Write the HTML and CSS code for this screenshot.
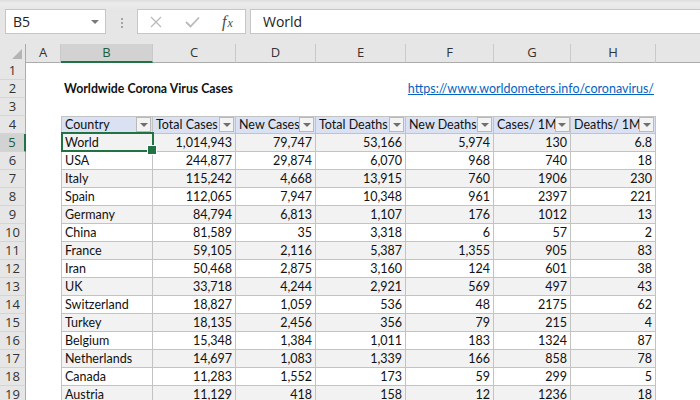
FILE: index.html
```html
<!DOCTYPE html>
<html lang="en">
<head>
<meta charset="utf-8">
<title>Worldwide Corona Virus Cases</title>
<link rel="stylesheet" href="styles.css">
</head>
<body>
<div class="app">
  <div class="fbar">
    <div class="namebox"><span>B5</span><span class="caret"></span></div>
    <div class="grip"><span></span><span></span><span></span></div>
    <div class="btns">
      <svg class="ico-x" width="12" height="12" viewBox="0 0 12 12"><path d="M1 1 L11 11 M11 1 L1 11" stroke="#b9b9b9" stroke-width="1.3" fill="none"/></svg>
      <svg class="ico-ok" width="15" height="12" viewBox="0 0 15 12"><path d="M1 6 L5.5 10.5 L14 1.5" stroke="#b9b9b9" stroke-width="1.8" fill="none"/></svg>
      <span class="fx"><i>f</i><i class="fx-x">x</i></span>
    </div>
    <div class="finput">World</div>
  </div>

  <div class="sheet">
    <div class="row colhead">
      <div class="corner"><svg width="10" height="10" viewBox="0 0 10 10"><path d="M10 0 L10 10 L0 10 Z" fill="#b4b4b4"/></svg></div>
      <div class="ch">A</div><div class="ch sel">B</div><div class="ch">C</div><div class="ch">D</div><div class="ch">E</div><div class="ch">F</div><div class="ch">G</div><div class="ch">H</div><div class="ch last"></div>
    </div>

    <div class="row"><div class="rh">1</div></div>
    <div class="row"><div class="rh">2</div><div></div><div class="title">Worldwide Corona Virus Cases</div><div class="link">https://www.worldometers.info/coronavirus/</div></div>
    <div class="row"><div class="rh">3</div></div>

    <div class="row hdr"><div class="rh">4</div><div></div>
      <div class="t first"><span>Country</span><span class="dd"></span></div>
      <div class="t"><span>Total Cases</span><span class="dd"></span></div>
      <div class="t"><span>New Cases</span><span class="dd"></span></div>
      <div class="t"><span>Total Deaths</span><span class="dd"></span></div>
      <div class="t"><span>New Deaths</span><span class="dd"></span></div>
      <div class="t"><span>Cases/ 1M</span><span class="dd"></span></div>
      <div class="t"><span>Deaths/ 1M</span><span class="dd"></span></div>
    </div>

    <div class="row band"><div class="rh sel">5</div><div></div><div class="t first active">World</div><div class="t n">1,014,943</div><div class="t n">79,747</div><div class="t n">53,166</div><div class="t n">5,974</div><div class="t n">130</div><div class="t n">6.8</div></div>
    <div class="row"><div class="rh">6</div><div></div><div class="t first">USA</div><div class="t n">244,877</div><div class="t n">29,874</div><div class="t n">6,070</div><div class="t n">968</div><div class="t n">740</div><div class="t n">18</div></div>
    <div class="row band"><div class="rh">7</div><div></div><div class="t first">Italy</div><div class="t n">115,242</div><div class="t n">4,668</div><div class="t n">13,915</div><div class="t n">760</div><div class="t n">1906</div><div class="t n">230</div></div>
    <div class="row"><div class="rh">8</div><div></div><div class="t first">Spain</div><div class="t n">112,065</div><div class="t n">7,947</div><div class="t n">10,348</div><div class="t n">961</div><div class="t n">2397</div><div class="t n">221</div></div>
    <div class="row band"><div class="rh">9</div><div></div><div class="t first">Germany</div><div class="t n">84,794</div><div class="t n">6,813</div><div class="t n">1,107</div><div class="t n">176</div><div class="t n">1012</div><div class="t n">13</div></div>
    <div class="row"><div class="rh">10</div><div></div><div class="t first">China</div><div class="t n">81,589</div><div class="t n">35</div><div class="t n">3,318</div><div class="t n">6</div><div class="t n">57</div><div class="t n">2</div></div>
    <div class="row band"><div class="rh">11</div><div></div><div class="t first">France</div><div class="t n">59,105</div><div class="t n">2,116</div><div class="t n">5,387</div><div class="t n">1,355</div><div class="t n">905</div><div class="t n">83</div></div>
    <div class="row"><div class="rh">12</div><div></div><div class="t first">Iran</div><div class="t n">50,468</div><div class="t n">2,875</div><div class="t n">3,160</div><div class="t n">124</div><div class="t n">601</div><div class="t n">38</div></div>
    <div class="row band"><div class="rh">13</div><div></div><div class="t first">UK</div><div class="t n">33,718</div><div class="t n">4,244</div><div class="t n">2,921</div><div class="t n">569</div><div class="t n">497</div><div class="t n">43</div></div>
    <div class="row"><div class="rh">14</div><div></div><div class="t first">Switzerland</div><div class="t n">18,827</div><div class="t n">1,059</div><div class="t n">536</div><div class="t n">48</div><div class="t n">2175</div><div class="t n">62</div></div>
    <div class="row band"><div class="rh">15</div><div></div><div class="t first">Turkey</div><div class="t n">18,135</div><div class="t n">2,456</div><div class="t n">356</div><div class="t n">79</div><div class="t n">215</div><div class="t n">4</div></div>
    <div class="row"><div class="rh">16</div><div></div><div class="t first">Belgium</div><div class="t n">15,348</div><div class="t n">1,384</div><div class="t n">1,011</div><div class="t n">183</div><div class="t n">1324</div><div class="t n">87</div></div>
    <div class="row band"><div class="rh">17</div><div></div><div class="t first">Netherlands</div><div class="t n">14,697</div><div class="t n">1,083</div><div class="t n">1,339</div><div class="t n">166</div><div class="t n">858</div><div class="t n">78</div></div>
    <div class="row"><div class="rh">18</div><div></div><div class="t first">Canada</div><div class="t n">11,283</div><div class="t n">1,552</div><div class="t n">173</div><div class="t n">59</div><div class="t n">299</div><div class="t n">5</div></div>
    <div class="row band"><div class="rh">19</div><div></div><div class="t first">Austria</div><div class="t n">11,129</div><div class="t n">418</div><div class="t n">158</div><div class="t n">12</div><div class="t n">1236</div><div class="t n">18</div></div>
  </div>
</div>
</body>
</html>
```

FILE: styles.css
```css
* { box-sizing: border-box; margin: 0; padding: 0; }

html, body { width: 700px; height: 400px; overflow: hidden; background: #fff; }
body { font-family: Lato, "Liberation Sans", sans-serif; color: #111; }

.app { width: 700px; height: 400px; overflow: hidden; }

/* formula bar */
.fbar {
  height: 44px;
  display: flex;
  align-items: flex-start;
  padding-top: 9px;
  background: linear-gradient(#dcdcdc 0, #ececec 3px, #e6e6e6 10px);
  font-family: "Open Sans", "Liberation Sans", sans-serif;
}
.namebox {
  margin-left: 5px;
  width: 101px;
  height: 25px;
  background: #fff;
  border: 1px solid #c6c6c6;
  display: flex;
  align-items: center;
  justify-content: space-between;
  padding: 0 6px 0 7px;
  font-size: 14px;
  color: #222;
}
.caret {
  width: 0; height: 0;
  border-left: 4px solid transparent;
  border-right: 4px solid transparent;
  border-top: 4px solid #7a7a7a;
}
.grip {
  margin-left: 15px;
  margin-top: 9px;
  display: flex;
  flex-direction: column;
  gap: 2px;
}
.grip span { width: 2px; height: 2px; background: #a5a5a5; }
.btns {
  margin-left: 14px;
  width: 109px;
  height: 25px;
  background: #fff;
  border: 1px solid #c6c6c6;
  display: flex;
  align-items: center;
  padding-left: 12px;
}
.ico-ok { margin-left: 23px; }
.fx {
  margin-left: 22px;
  font-family: "Liberation Serif", serif;
  font-size: 16px;
  color: #4a4a4a;
  line-height: 1;
}
.fx i { font-style: italic; }
.fx-x { font-size: 12px; margin-left: 1px; }
.finput {
  margin-left: 4px;
  flex: 1;
  height: 25px;
  background: #fff;
  border: 1px solid #c6c6c6;
  border-right: none;
  padding-left: 12px;
  font-size: 14px;
  line-height: 23px;
  color: #222;
}

/* sheet */
.row {
  display: grid;
  grid-template-columns: 26px 35px 92px 83px 80px 90px 88px 77px 85px 1fr;
  height: 18px;
}

.corner {
  background: #e6e6e6;
  border-right: 1px solid #ababab;
  border-bottom: 1px solid #ababab;
  display: flex;
  align-items: flex-end;
  justify-content: flex-end;
  padding: 0 3px 3px 0;
}
.ch {
  background: #e6e6e6;
  border-right: 1px solid #c9c9c9;
  border-bottom: 1px solid #ababab;
  font-family: "Open Sans", "Liberation Sans", sans-serif;
  font-size: 13px;
  line-height: 17px;
  text-align: center;
  color: #333;
}
.ch.sel {
  background: #d2d2d2;
  border-bottom: 2px solid #217346;
  color: #1d5e3a;
}
.ch.last { border-right: none; }

.rh {
  background: #e6e6e6;
  border-right: 1px solid #ababab;
  border-bottom: 1px solid #d5d5d5;
  font-family: "Open Sans", "Liberation Sans", sans-serif;
  font-size: 13px;
  line-height: 17px;
  text-align: center;
  color: #333;
}
.rh.sel {
  background: #d2d2d2;
  border-right: 2px solid #217346;
  color: #1d5e3a;
}

.title {
  grid-column: 3 / 6;
  padding-left: 3px;
  font-weight: bold;
  font-size: 12.3px;
  line-height: 18px;
  white-space: nowrap;
}
.link {
  grid-column: 6 / 10;
  padding-right: 2px;
  text-align: right;
  font-size: 12.5px;
  line-height: 18px;
  color: #0563c1;
  text-decoration: underline;
  white-space: nowrap;
}

.t {
  border-right: 1px solid #c3c3c3;
  border-bottom: 1px solid #c3c3c3;
  font-size: 12.5px;
  line-height: 17px;
  padding: 0 3px;
  white-space: nowrap;
  overflow: hidden;
  background: #fff;
}
.t.first { border-left: 1px solid #c3c3c3; }
.t.n { text-align: right; }
.band .t { background: #f2f2f2; }

.hdr .t {
  background: #d9e1f2;
  border-top: 1px solid #c3c3c3;
  display: flex;
  justify-content: space-between;
  align-items: flex-start;
  padding: 0 1px 0 3px;
  line-height: 16px;
}
.dd {
  flex: none;
  width: 15px;
  height: 15px;
  border: 1px solid #b9b9b9;
  background: #f3f3f3;
  display: flex;
  align-items: center;
  justify-content: center;
  margin-left: -2px;
}
.dd::after {
  content: "";
  width: 0; height: 0;
  border-left: 4px solid transparent;
  border-right: 4px solid transparent;
  border-top: 4px solid #6f6f6f;
}

.t.active {
  position: relative;
  overflow: visible;
  z-index: 2;
}
.t.active::after {
  content: "";
  position: absolute;
  left: -1px;
  top: -2px;
  right: -2px;
  bottom: -1px;
  border: 2px solid #217346;
}
.t.active::before {
  content: "";
  position: absolute;
  right: -5px;
  bottom: -4px;
  width: 8px;
  height: 8px;
  background: #217346;
  border: 1px solid #fff;
  z-index: 3;
}
```
